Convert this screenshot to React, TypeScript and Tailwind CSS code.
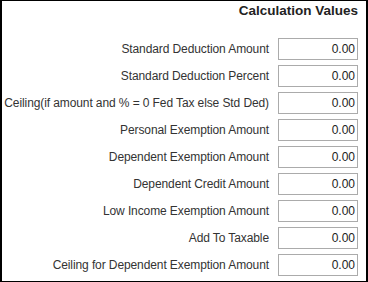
const ROWS = [
  'Standard Deduction Amount',
  'Standard Deduction Percent',
  'Ceiling(if amount and % = 0 Fed Tax else Std Ded)',
  'Personal Exemption Amount',
  'Dependent Exemption Amount',
  'Dependent Credit Amount',
  'Low Income Exemption Amount',
  'Add To Taxable',
  'Ceiling for Dependent Exemption Amount',
]

function Row({ label }: { label: string }) {
  return (
    <div className="flex h-[22px] items-center justify-end gap-[9px]">
      <span className="whitespace-nowrap text-[12px] leading-[16px] tracking-[-0.1px] text-[#333]">
        {label}
      </span>
      <div className="flex h-[22px] w-[80px] shrink-0 items-center justify-end border border-[#ababab] bg-white pr-[2px] text-[12px] text-[#222]">
        0.00
      </div>
    </div>
  )
}

export default function App() {
  return (
    <div
      className="flex h-[282px] w-[368px] flex-col overflow-hidden border-x-2 border-y border-black bg-white"
      style={{ fontFamily: '"Liberation Sans", Arial, sans-serif' }}
    >
      <div className="flex h-[20px] items-center justify-end pr-[8px] pt-[1px] text-[13.5px] font-bold text-[#222]">
        Calculation Values
      </div>
      <div className="flex flex-col gap-[5px] pr-[8px] pt-[17px]">
        {ROWS.map((r) => (
          <Row key={r} label={r} />
        ))}
      </div>
    </div>
  )
}
